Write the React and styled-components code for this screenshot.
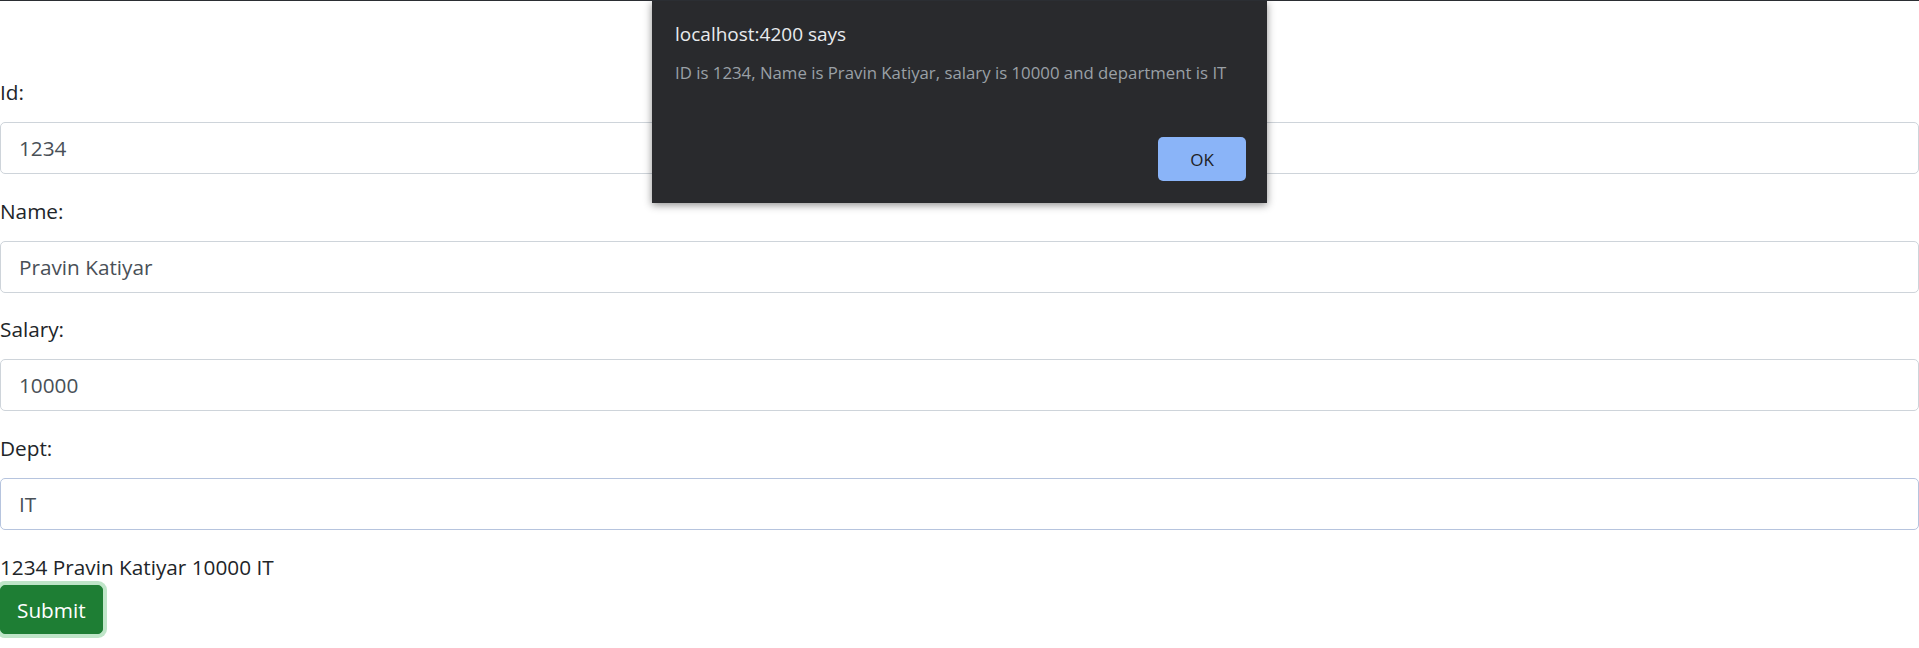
import styled, { createGlobalStyle } from "styled-components";

const GlobalStyle = createGlobalStyle`
  body {
    margin: 0;
    border-top: 1px solid #2b2e33;
    background: #fff;
    color: #212529;
    font-family: "Open Sans", "Segoe UI", Roboto, sans-serif;
    font-size: 20.75px;
  }
`

const Page = styled.div`
  position: relative;
  min-height: 647px;
`
const Form = styled.form`
  padding-top: 76px;
  display: flex;
  flex-direction: column;
`
const Field = styled.div`
  display: flex;
  flex-direction: column;
  margin-bottom: 21.5px;
`
const Label = styled.label`
  line-height: 30px;
  margin-bottom: 15px;
`
const Input = styled.input`
  box-sizing: border-box;
  width: 100%;
  height: 52px;
  padding: 0 18px;
  border: 1px solid ${props => props.focused ? '#b6c4de' : '#ced4da'};
  border-radius: 5px;
  font: inherit;
  color: #495057;
  background: #fff;
  outline: none;
`
const Summary = styled.div`
  line-height: 30px;
  margin-top: 1px;
`
const SubmitButton = styled.button`
  align-self: flex-start;
  margin-top: 3px;
  height: 49px;
  padding: 0 16px;
  border: 1px solid #1e7e34;
  border-radius: 5px;
  background: #1e7e34;
  color: #fff;
  font: inherit;
  box-shadow: 0 0 0 4px rgba(72, 180, 97, 0.35);
`
const Dialog = styled.div`
  position: absolute;
  top: 0;
  left: 652px;
  width: 615px;
  height: 202px;
  box-sizing: border-box;
  padding: 19px 21px 22px 23px;
  background: #292a2d;
  box-shadow: 0 2px 8px rgba(0, 0, 0, 0.45);
  display: flex;
  flex-direction: column;
`
const Title = styled.div`
  color: #e8eaed;
  font-size: 19px;
  line-height: 28px;
`
const Message = styled.div`
  margin-top: 13px;
  color: #9aa0a6;
  font-size: 16.8px;
  line-height: 24px;
`
const Actions = styled.div`
  margin-top: auto;
  display: flex;
  justify-content: flex-end;
`
const OkButton = styled.button`
  width: 88px;
  height: 44px;
  border: none;
  border-radius: 5px;
  background: #8ab4f8;
  color: #202124;
  font-family: inherit;
  font-size: 17px;
`

const fields = [
  { label: 'Id:', value: '1234' },
  { label: 'Name:', value: 'Pravin Katiyar' },
  { label: 'Salary:', value: '10000' },
  { label: 'Dept:', value: 'IT', focused: true },
]

const App = () => {
  return (
    <>
      <GlobalStyle />
      <Page>
        <Form onSubmit={e => e.preventDefault()}>
          {fields.map(f => (
            <Field key={f.label}>
              <Label>{f.label}</Label>
              <Input defaultValue={f.value} focused={f.focused} />
            </Field>
          ))}
          <Summary>1234 Pravin Katiyar 10000 IT</Summary>
          <SubmitButton type="submit">Submit</SubmitButton>
        </Form>
        <Dialog>
          <Title>localhost:4200 says</Title>
          <Message>ID is 1234, Name is Pravin Katiyar, salary is 10000 and department is IT</Message>
          <Actions>
            <OkButton>OK</OkButton>
          </Actions>
        </Dialog>
      </Page>
    </>
  )
};

export default App;
